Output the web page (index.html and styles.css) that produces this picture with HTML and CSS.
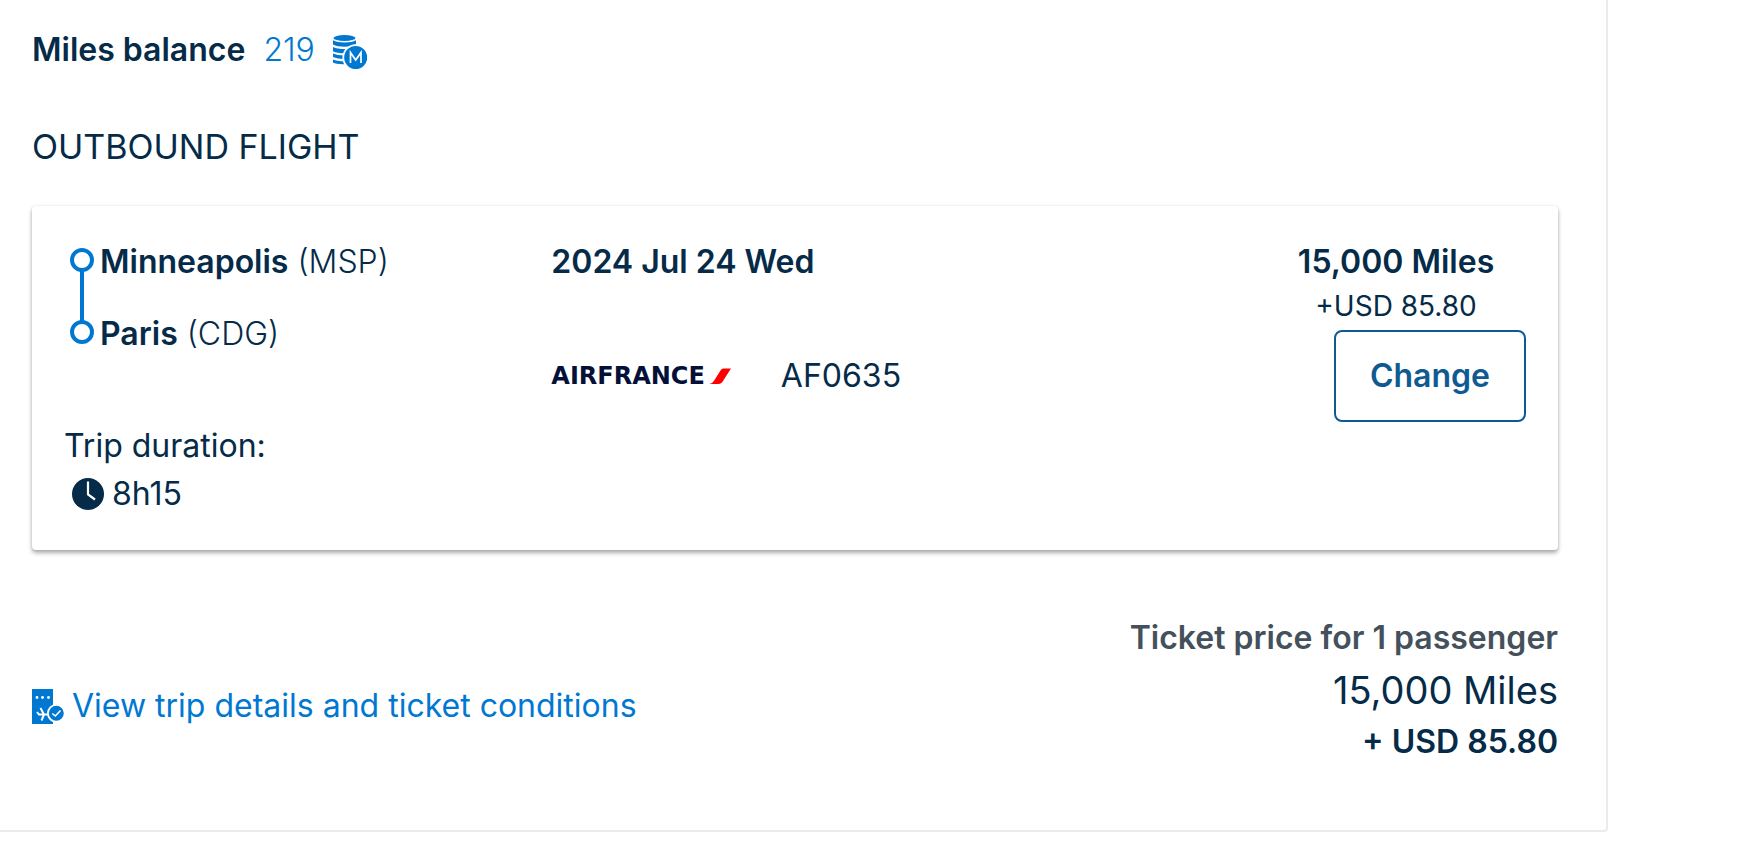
FILE: index.html
```html
<!DOCTYPE html>
<html lang="en">
<head>
<meta charset="utf-8">
<meta name="viewport" content="width=device-width, initial-scale=1">
<title>Outbound flight</title>
<link rel="stylesheet" href="styles.css">
</head>
<body>
<main class="panel">
  <p class="balance">
    <strong>Miles balance</strong>
    <span class="balance-value">219</span>
    <svg class="icon-coins" viewBox="0 0 34 34" aria-hidden="true">
      <g fill="#0078d2">
        <ellipse cx="11.500" cy="3" rx="11" ry="3"/>
        <path d="M0 5.200C5 8.200 18 8.200 23 5.200V9.600C18 12.600 5 12.600 0 9.600Z"/>
        <path d="M0 12C5 14.700 18 14.700 23 12V16.200C18 19 5 19 0 16.200Z"/>
        <path d="M0 18.400C5 21 18 21 23 18.400V22C18 24.500 5 24.500 0 22Z"/>
        <path d="M0 24.400C4 26.800 18 26.800 23 24.400V26C18 30.200 4 30 0 27.600Z"/>
        <circle cx="22.700" cy="22.500" r="12.400" stroke="#fff" stroke-width="1.800"/>
      </g>
      <path d="M17.500 28V17.500L22.700 25L28 17.500V28" fill="none" stroke="#fff" stroke-width="1.700"/>
    </svg>
  </p>

  <h1 class="heading">OUTBOUND FLIGHT</h1>

  <section class="card">
    <div class="trip">
      <ol class="route">
        <li class="stop"><b>Minneapolis</b> (MSP)</li>
        <li class="stop"><b>Paris</b> (CDG)</li>
      </ol>
      <div class="duration">
        <span>Trip duration:</span>
        <span class="duration-value">
          <svg class="icon-clock" viewBox="0 0 32 32" aria-hidden="true">
            <circle cx="16" cy="16" r="16" fill="#052b48"/>
            <path d="M16 3.500V16.500L23 21.500" fill="none" stroke="#fff" stroke-width="2.200"/>
          </svg>
          8h15
        </span>
      </div>
    </div>
    <div class="flight">
      <b>2024 Jul 24 Wed</b>
      <div class="carrier">
        <span class="airline">AIRFRANCE
          <svg class="airline-mark" viewBox="0 0 22 16" aria-hidden="true">
            <path d="M0 16C3 15.500 4 14.500 5.500 12L11.500 2.500C12.500 1 13.500 .500 15 .500H22L14 13C12.500 15.300 11.500 16 9.500 16Z" fill="#ff0000"/>
          </svg>
        </span>
        <span>AF0635</span>
      </div>
    </div>
    <div class="fare">
      <b>15,000 Miles</b>
      <span class="fare-tax">+USD 85.80</span>
      <button class="change" type="button">Change</button>
    </div>
  </section>

  <footer class="summary">
    <a class="details" href="#details">
      <svg class="icon-ticket" viewBox="0 0 32 35" aria-hidden="true">
        <path d="M0 0H21V35H0Z" fill="#0078d2"/>
        <g fill="#fff">
          <circle cx="5" cy="8.500" r="1.400"/><circle cx="10.500" cy="8.500" r="1.400"/><circle cx="16.500" cy="8.500" r="1.400"/>
        </g>
        <path d="M5 23L7 25.500H17M8.500 19L12 25.500L9.500 31.500" fill="none" stroke="#fff" stroke-width="2"/>
        <circle cx="24.300" cy="24.300" r="8.400" fill="#0078d2" stroke="#fff" stroke-width="1.800"/>
        <path d="M20.300 24.500L23.300 27L28.500 21.500" fill="none" stroke="#fff" stroke-width="1.600"/>
      </svg>
      View trip details and ticket conditions
    </a>
    <div class="total">
      <span class="total-label">Ticket price for 1 passenger</span>
      <span class="total-miles">15,000 Miles</span>
      <b>+ USD 85.80</b>
    </div>
  </footer>
</main>
</body>
</html>
```
FILE: styles.css
```css
*, *::before, *::after { box-sizing: border-box; }
body {
  margin: 0;
  background: #fff;
  color: #052b48;
  font: 400 32px/40px Inter, "Liberation Sans", sans-serif;
}
b, strong { font-weight: 600; }
svg { display: block; flex: none; }

.panel {
  margin-right: 150px;
  padding: 30px 48px 68px 32px;
  border: solid #ebebeb;
  border-width: 0 2px 2px 0;
  border-radius: 0 0 4px 0;
}
.balance {
  display: flex;
  gap: 18px;
  margin: 0;
}
.balance-value { color: #0078d2; font-weight: 300; }
.icon-coins { width: 34px; height: 34px; margin-top: 5px; }
.heading {
  margin: 53px 0 35px;
  font-size: 34px;
  font-weight: 400;
  line-height: 48px;
}

.card {
  display: grid;
  grid-template-columns: 15fr 22fr 8fr;
  padding: 36px 32px;
  border-radius: 4px;
  box-shadow: 0 3px 4px rgba(0, 0, 0, .32), 0 0 3px rgba(0, 0, 0, .1);
}
.route {
  display: grid;
  gap: 32px;
  margin: 0;
  padding: 0 0 0 6px;
  font-weight: 300;
  list-style: none;
}
.stop {
  position: relative;
  padding-left: 30px;
}
.stop::before {
  content: "";
  position: absolute;
  left: 0;
  top: 6px;
  width: 24px;
  height: 24px;
  border: 4px solid #0078d2;
  border-radius: 50%;
}
.stop:first-child::after {
  content: "";
  position: absolute;
  left: 10px;
  top: 29px;
  width: 4px;
  height: 50px;
  background: #0078d2;
}
.duration {
  display: grid;
  gap: 8px;
  margin-top: 72px;
}
.duration-value {
  display: flex;
  align-items: center;
  gap: 8px;
  padding-left: 8px;
}
.icon-clock { width: 32px; height: 32px; }

.flight {
  display: grid;
  align-content: start;
  gap: 74px;
}
.carrier {
  display: flex;
  align-items: center;
  gap: 50px;
}
.airline {
  display: flex;
  align-items: center;
  gap: 4px;
  color: #051039;
  font: 700 24px/24px "DejaVu Sans", sans-serif;
}
.airline-mark { width: 22px; height: 16px; }

.fare {
  display: grid;
  align-content: start;
  justify-items: center;
}
.fare-tax {
  font-size: 28px;
  line-height: 48px;
}
.change {
  justify-self: end;
  padding: 24px 34px;
  border: 2px solid #0f5a91;
  border-radius: 8px;
  background: #fff;
  color: #0f5a91;
  font: 600 32px/40px Inter, "Liberation Sans", sans-serif;
}

.summary {
  display: flex;
  justify-content: space-between;
  align-items: end;
  margin-top: 68px;
}
.details {
  display: flex;
  align-items: center;
  gap: 8px;
  padding-bottom: 36px;
  color: #0078d2;
  text-decoration: none;
}
.icon-ticket { width: 32px; height: 35px; }
.total {
  display: grid;
  justify-items: end;
}
.total-label { color: #44515c; font-weight: 600; }
.total-miles {
  font-size: 38px;
  font-weight: 400;
  line-height: 64px;
}
```
